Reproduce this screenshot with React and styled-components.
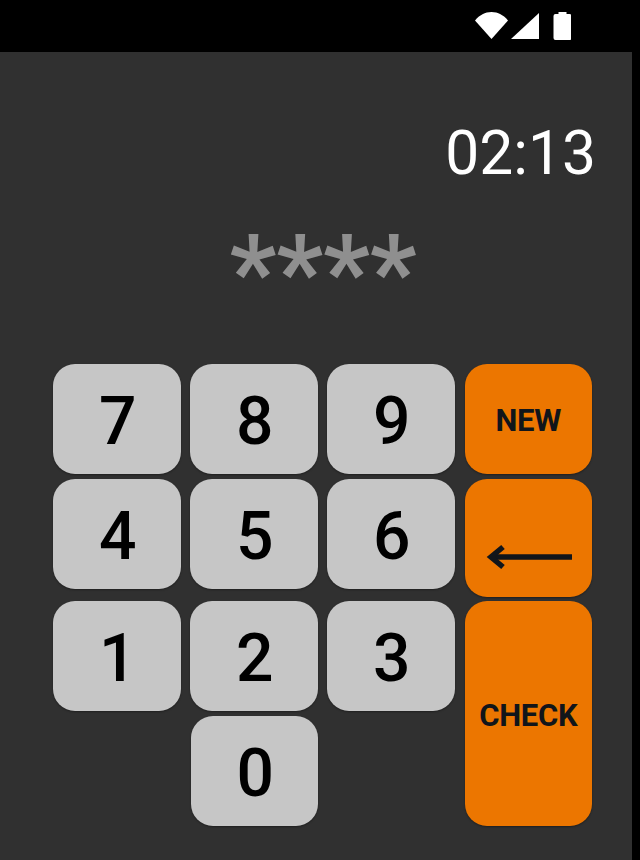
import React from "react";
import styled, { createGlobalStyle } from "styled-components";

const GlobalStyle = createGlobalStyle`
  html, body {
    margin: 0;
    padding: 0;
    background: #000;
    font-family: Roboto, "Liberation Sans", sans-serif;
  }
`;

const Screen = styled.div`
  width: 640px;
  height: 860px;
  display: flex;
  flex-direction: column;
  background: #000;
  overflow: hidden;
`;

const StatusBar = styled.div`
  height: 52px;
  flex: none;
  display: flex;
  justify-content: flex-end;
  align-items: flex-start;
  padding: 12px 69px 0 0;
  box-sizing: border-box;
`;

const StatusIcons = styled.svg`
  display: block;
`;

const Panel = styled.main`
  width: 632px;
  flex: 1;
  background: #303030;
  display: flex;
  flex-direction: column;
  box-sizing: border-box;
`;

const Timer = styled.div`
  height: 66px;
  margin-top: 69px;
  padding-right: 36px;
  text-align: right;
  color: #fff;
  font-size: 60.5px;
  font-weight: 400;
  line-height: 66px;
`;

const Masked = styled.div`
  height: 91px;
  margin-top: 36px;
  padding-left: 14px;
  text-align: center;
  color: #8f8f8f;
  font-size: 103px;
  font-weight: 700;
  line-height: 100px;
`;

const Pad = styled.div`
  display: flex;
  gap: 9.5px;
  margin: 50px 0 0 53px;
`;

const Digits = styled.div`
  display: flex;
  flex-direction: column;
  gap: 5px;
  width: 402px;
`;

const DigitRow = styled.div`
  display: flex;
  gap: 9.5px;
  height: 110px;
  margin-top: ${(p) => (p.$lowered ? "7px" : "0")};
  padding-left: ${(p) => (p.$offset ? "137.5px" : "0")};
`;

const Key = styled.button`
  width: 127.5px;
  border: 0;
  padding: 0;
  border-radius: 22px;
  box-shadow: 0 1px 2px rgba(0, 0, 0, 0.35);
  font-family: inherit;
`;

const DigitKey = styled(Key)`
  height: 110px;
  padding: 5px 0 0 2px;
  box-sizing: border-box;
  background: #c6c6c6;
  color: #000;
  font-size: 66px;
  font-weight: 500;
  line-height: 1;
`;

const Actions = styled.div`
  display: flex;
  flex-direction: column;
  width: 127.5px;
`;

const ActionKey = styled(Key)`
  height: ${(p) => p.$height}px;
  margin-top: ${(p) => p.$top || 0}px;
  padding-top: 3px;
  box-sizing: border-box;
  background: #ec7600;
  color: #11151a;
  font-size: 31px;
  font-weight: 700;
  letter-spacing: -0.3px;
`;

const BackKey = styled(ActionKey)`
  display: flex;
  justify-content: center;
  align-items: flex-end;
  padding: 0 0 27px 4px;
`;

const Arrow = styled.svg`
  display: block;
`;

const ROWS = [["7", "8", "9"], ["4", "5", "6"], ["1", "2", "3"]];

export default function App() {
  return (
    <Screen>
      <GlobalStyle />
      <StatusBar>
        <StatusIcons width="96" height="28" viewBox="0 0 96 28" fill="#fff">
          <path d="M0 8.500C4.500 3 10 0 16.500 0S28.500 3 33 8.500L16.500 27z" />
          <path d="M36 27L64 1v26z" />
          <path d="M78.500 4q0-2 2-2h3V0h8v2h3q2 0 2 2v22q0 2-2 2h-14q-2 0-2-2z" />
        </StatusIcons>
      </StatusBar>
      <Panel>
        <Timer>02:13</Timer>
        <Masked>****</Masked>
        <Pad>
          <Digits>
            {ROWS.map((row, i) => (
              <DigitRow key={row[0]} $lowered={i === 2}>
                {row.map((d) => (
                  <DigitKey key={d}>{d}</DigitKey>
                ))}
              </DigitRow>
            ))}
            <DigitRow $offset>
              <DigitKey>0</DigitKey>
            </DigitRow>
          </Digits>
          <Actions>
            <ActionKey $height={110}>NEW</ActionKey>
            <BackKey $height={118} $top={5} aria-label="Back">
              <Arrow width="88" height="26" viewBox="0 0 88 26">
                <path d="M86 13H8" stroke="#11151a" strokeWidth="5.500" fill="none" />
                <path d="M17 3L5 13l12 10" stroke="#11151a" strokeWidth="5.500" fill="none" />
              </Arrow>
            </BackKey>
            <ActionKey $height={225} $top={4}>CHECK</ActionKey>
          </Actions>
        </Pad>
      </Panel>
    </Screen>
  );
}
